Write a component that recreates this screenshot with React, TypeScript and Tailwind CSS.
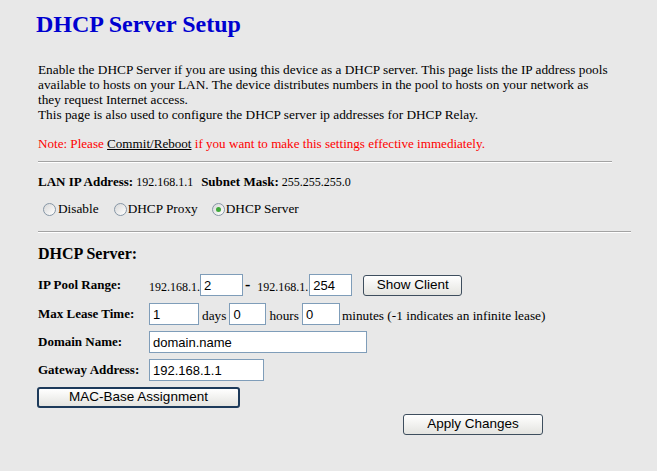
import React from "react";

const inputCls =
  "h-[22px] border border-[#7f9db9] bg-white px-[3px] font-['Liberation_Sans',Arial,sans-serif] text-[13px] leading-[20px] text-black outline-none";

function Radio({ checked }: { checked?: boolean }) {
  return (
    <span className="relative inline-flex h-[13px] w-[13px] items-center justify-center rounded-full border border-[#8696a6] bg-gradient-to-br from-[#d8d8d8] to-white">
      {checked && <span className="h-[5px] w-[5px] rounded-full bg-[#3fa83a]" />}
    </span>
  );
}

const btnCls =
  "flex items-center justify-center rounded-[3px] bg-gradient-to-b from-white to-[#e4e4e0] font-['Liberation_Sans',Arial,sans-serif] text-[13.5px] text-black";

export default function App() {
  return (
    <div className="h-[471px] w-[657px] overflow-hidden bg-[#e8e8e8] font-['Liberation_Serif','Times_New_Roman',serif] text-[13.3px] text-black">
      <div className="pl-[38px] pt-[10px]">
        <h1 className="-ml-[2px] text-[24px] font-bold leading-[28px] text-[#0000d0]">
          DHCP Server Setup
        </h1>
        <div className="mt-[24px] whitespace-nowrap leading-[15px]">
          Enable the DHCP Server if you are using this device as a DHCP server. This page lists the IP address pools
          <br />
          available to hosts on your LAN. The device distributes numbers in the pool to hosts on your network as
          <br />
          they request Internet access.
          <br />
          This page is also used to configure the DHCP server ip addresses for DHCP Relay.
        </div>
        <div className="mt-[14px] whitespace-nowrap text-[13.1px] leading-[15px] text-[#ff0000]">
          Note: Please <span className="text-black underline">Commit/Reboot</span> if you want to make this settings
          effective immediately.
        </div>
        <div className="mt-[10px] h-[2px] w-[574px] border-t border-b border-t-[#a3a3a3] border-b-white" />
        <div className="mt-[11px] flex items-baseline leading-[15px]">
          <b className="text-[13px]">LAN IP Address:</b>
          <span className="ml-[3px] text-[12px]">192.168.1.1</span>
          <b className="ml-[8px] text-[13px]">Subnet Mask:</b>
          <span className="ml-[3px] text-[12px]">255.255.255.0</span>
        </div>
        <div className="mt-[9px] flex h-[20px] items-center pl-[5px]">
          <Radio />
          <span className="ml-[2px]">Disable</span>
          <span className="ml-[15px] flex items-center">
            <Radio />
          </span>
          <span className="ml-[1px]">DHCP Proxy</span>
          <span className="ml-[14px] flex items-center">
            <Radio checked />
          </span>
          <span className="ml-[1px]">DHCP Server</span>
        </div>
        <div className="mt-[12px] h-[2px] w-[593px] border-t border-b border-t-[#a3a3a3] border-b-white" />
        <div className="mt-[11px] text-[16px] font-bold leading-[20px]">DHCP Server:</div>

        <div className="mt-[10px] flex h-[22px] items-center">
          <b className="w-[111px] text-[13px]">IP Pool Range:</b>
          <span className="mt-[4px] text-[12px]">192.168.1.</span>
          <input className={inputCls + " w-[43px]"} defaultValue="2" />
          <b className="ml-[2px] mr-[3px] text-[16px]">-</b>
          <span className="ml-[4px] mt-[4px] text-[12px]">192.168.1.</span>
          <input className={inputCls + " ml-[1px] w-[43px]"} defaultValue="254" />
          <button className={btnCls + " ml-[11px] h-[21px] w-[99px] border border-[#3e4e5e]"}>Show Client</button>
        </div>

        <div className="mt-[7px] flex h-[22px] items-center">
          <b className="w-[111px] text-[13px]">Max Lease Time:</b>
          <input className={inputCls + " w-[50px]"} defaultValue="1" />
          <span className="ml-[3px] mt-[4px]">days</span>
          <input className={inputCls + " ml-[3px] w-[37px]"} defaultValue="0" />
          <span className="ml-[3px] mt-[4px]">hours</span>
          <input className={inputCls + " ml-[3px] w-[38px]"} defaultValue="0" />
          <span className="ml-[2px] mt-[4px]">minutes (-1 indicates an infinite lease)</span>
        </div>

        <div className="mt-[6px] flex h-[22px] items-center">
          <b className="w-[111px] text-[13px]">Domain Name:</b>
          <input className={inputCls + " w-[218px]"} defaultValue="domain.name" />
        </div>

        <div className="mt-[6px] flex h-[22px] items-center">
          <b className="w-[111px] text-[13px]">Gateway Address:</b>
          <input className={inputCls + " w-[115px]"} defaultValue="192.168.1.1" />
        </div>

        <button className={btnCls + " -ml-[1px] mt-[6px] h-[21px] w-[203px] border-2 border-[#1d3a5a]"}>
          MAC-Base Assignment
        </button>

        <button className={btnCls + " ml-[365px] mt-[6px] h-[21px] w-[140px] border border-[#3e4e5e]"}>
          Apply Changes
        </button>
      </div>
    </div>
  );
}
